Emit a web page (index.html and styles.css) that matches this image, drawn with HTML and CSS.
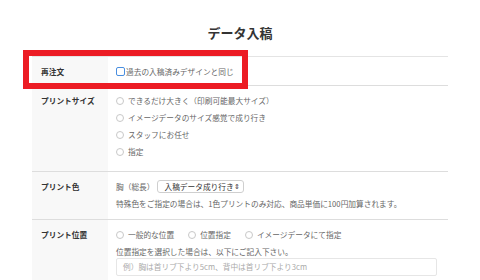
FILE: index.html
```html
<!DOCTYPE HTML>
<html>
<head>
<meta charset="utf-8">
<title>データ入稿</title>
<link rel="stylesheet" href="styles.css">
</head>
<body>
<div class="page">
  <h1 class="title">データ入稿</h1>

  <div class="form">
    <!-- 再注文 -->
    <div class="row row-first">
      <div class="label">再注文</div>
      <div class="field">
        <label class="opt"><span class="check"></span>過去の入稿済みデザインと同じ</label>
      </div>
      <div class="mark"></div>
    </div>

    <!-- プリントサイズ -->
    <div class="row">
      <div class="label">プリントサイズ</div>
      <div class="field">
        <label class="opt"><span class="radio"></span>できるだけ大きく（印刷可能最大サイズ）</label>
        <label class="opt"><span class="radio"></span>イメージデータのサイズ感覚で成り行き</label>
        <label class="opt"><span class="radio"></span>スタッフにお任せ</label>
        <label class="opt"><span class="radio"></span>指定</label>
      </div>
    </div>

    <!-- プリント色 -->
    <div class="row row-color">
      <div class="label">プリント色</div>
      <div class="field">
        <div class="line">胸（総長）<span class="select"><span>入稿データ成り行き</span><span class="arrows">&#8661;</span></span></div>
        <div class="line">特殊色をご指定の場合は、1色プリントのみ対応、商品単価に100円加算されます。</div>
      </div>
    </div>

    <!-- プリント位置 -->
    <div class="row row-pos">
      <div class="label">プリント位置</div>
      <div class="field">
        <div class="line inline">
          <label class="opt"><span class="radio"></span>一般的な位置</label>
          <label class="opt"><span class="radio"></span>位置指定</label>
          <label class="opt"><span class="radio"></span>イメージデータにて指定</label>
        </div>
        <div class="line">位置指定を選択した場合は、以下にご記入下さい。</div>
        <div class="input">例）胸は首リブ下より5cm、背中は首リブ下より3cm</div>
      </div>
    </div>
  </div>
</div>
</body>
</html>
```

FILE: styles.css
```css
* {margin:0; padding:0; box-sizing:border-box;}
body {background:#fff; font-family:"Noto Sans CJK JP", "Noto Sans", sans-serif; color:#666; font-size:7.7px;}

.page {width:416px; margin:0 auto;}
.title {font-size:13px; font-weight:bold; color:#333; text-align:center; line-height:18px; padding-top:24px; padding-bottom:14px;}

/* 行：左がラベル、右が入力 */
.row {display:grid; grid-template-columns:76px 1fr; border-bottom:1px solid #ddd;}
.row-first {border-top:1px solid #e4e4e4; position:relative;}
.label {background:#f8f8f8; color:#333; font-weight:bold; padding:6px 0 0 9px; line-height:17px;}
.field {padding:6px 0 11px 8px;}
.row-first .field {padding-bottom:5px;}
.row-first .label {padding-bottom:5px;}
.row-color .field {padding-bottom:7px;}
.row-pos .field {padding-bottom:8px;}

.opt {display:flex; align-items:center; line-height:17px; white-space:nowrap;}
.line {line-height:17px; display:flex; align-items:center; white-space:nowrap;}
.line.inline .opt {margin-right:14px;}

.radio {width:8px; height:8px; border:1px solid #c8c8c8; border-radius:50%; margin-right:4px; background:#fff; flex:none;}
.check {width:9px; height:9px; border:1px solid #4a8fe0; border-radius:2px; margin-right:1px; background:#fff; flex:none;}

.select {display:inline-flex; align-items:center; justify-content:space-between; height:13px; width:87px; padding:0 4px 0 6px; margin-left:3px; border:1px solid #cfcfcf; border-radius:3px; color:#333; line-height:11px;}
.arrows {font-size:7px; color:#333;}

.input {height:18px; margin-top:-2px; border:1px solid #e6e6e6; border-radius:2px; color:#aaa; line-height:16px; padding-left:6px; width:321px;}

/* 赤い注目枠 */
.mark {position:absolute; left:-9px; top:-7px; width:225px; height:39px; border:6px solid #ec1c24;}
```
